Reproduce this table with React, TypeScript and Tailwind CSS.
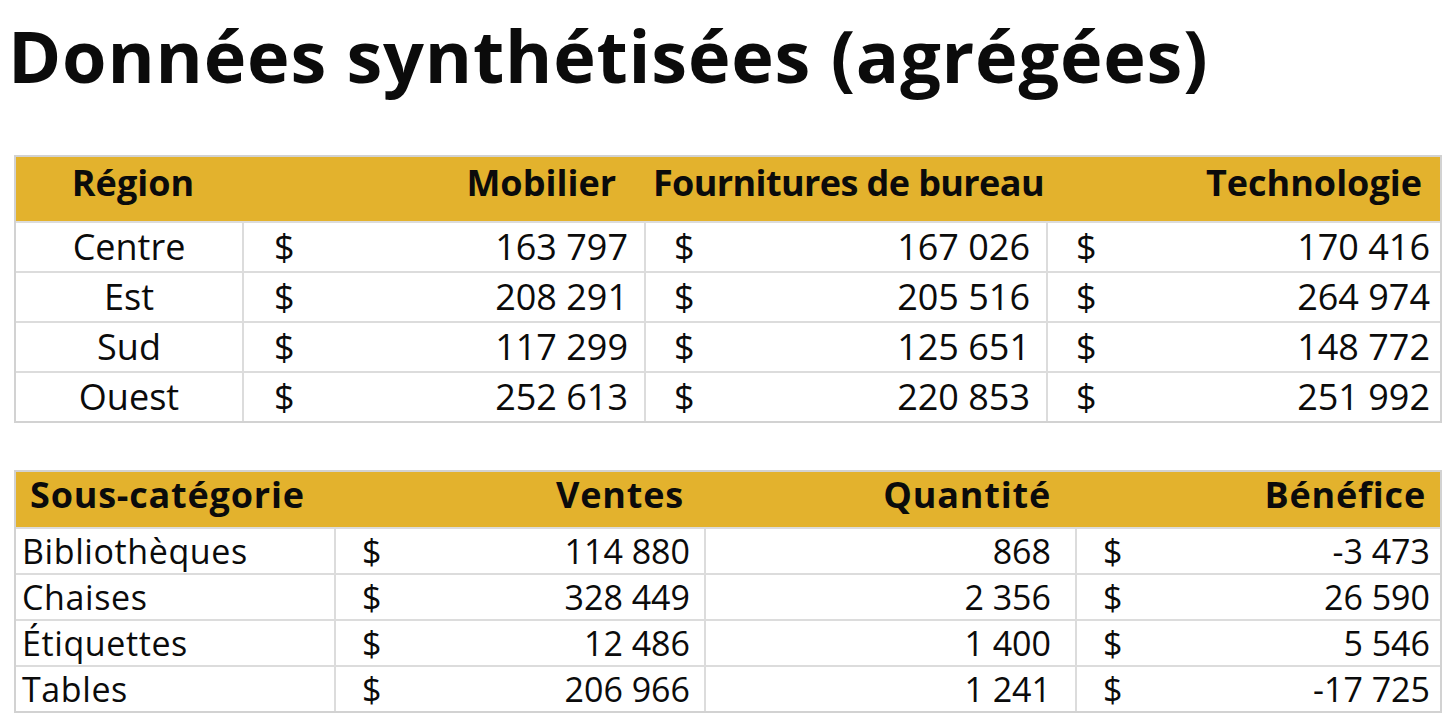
import React from "react";

const font = { fontFamily: '"Open Sans", "Liberation Sans", sans-serif' };

const regions = [
  { name: "Centre", mob: "163 797", fou: "167 026", tech: "170 416" },
  { name: "Est", mob: "208 291", fou: "205 516", tech: "264 974" },
  { name: "Sud", mob: "117 299", fou: "125 651", tech: "148 772" },
  { name: "Ouest", mob: "252 613", fou: "220 853", tech: "251 992" },
];

const subcats = [
  { name: "Bibliothèques", ventes: "114 880", qte: "868", benef: "-3 473" },
  { name: "Chaises", ventes: "328 449", qte: "2 356", benef: "26 590" },
  { name: "Étiquettes", ventes: "12 486", qte: "1 400", benef: "5 546" },
  { name: "Tables", ventes: "206 966", qte: "1 241", benef: "-17 725" },
];

function Money({ value, left, right }: { value: string; left: string; right: string }) {
  return (
    <div className={`flex items-center justify-between h-full ${left} ${right}`}>
      <span>$</span>
      <span>{value}</span>
    </div>
  );
}

export default function App() {
  return (
    <div className="w-[1456px] h-[720px] bg-white text-[#0b0b0b] overflow-hidden" style={font}>
      <h1 className="pl-[8px] pt-[12px] h-[155px] text-[72px] leading-[86px] font-bold tracking-[0.8px] whitespace-nowrap">
        Données synthétisées (agrégées)
      </h1>

      {/* Tableau par région */}
      <div className="ml-[14px] w-[1428px] border-2 border-[#d2d2d2] overflow-hidden">
        <div className="grid grid-cols-[226px_402px_402px_394px] h-[64px] pb-[12px] bg-[#e3b22d] items-center text-[36px] leading-[44px] font-bold">
          <div className="text-center pl-[8px]">Région</div>
          <div className="text-right pr-[28px]">Mobilier</div>
          <div className="text-right pr-[2px] whitespace-nowrap tracking-[-0.6px]">Fournitures de bureau</div>
          <div className="text-right pr-[18px]">Technologie</div>
        </div>
        {regions.map((r) => (
          <div
            key={r.name}
            className="grid grid-cols-[226px_402px_402px_394px] h-[50px] border-t-2 border-[#dcdcdc] text-[36px] leading-[44px]"
          >
            <div className="flex items-center justify-center">{r.name}</div>
            <div className="border-l-2 border-[#dcdcdc]">
              <Money value={r.mob} left="pl-[30px]" right="pr-[16px]" />
            </div>
            <div className="border-l-2 border-[#dcdcdc]">
              <Money value={r.fou} left="pl-[28px]" right="pr-[16px]" />
            </div>
            <div className="border-l-2 border-[#dcdcdc]">
              <Money value={r.tech} left="pl-[28px]" right="pr-[10px]" />
            </div>
          </div>
        ))}
      </div>

      {/* Tableau par sous-catégorie */}
      <div className="ml-[14px] mt-[47px] w-[1428px] border-2 border-[#d2d2d2] overflow-hidden">
        <div className="grid grid-cols-[318px_370px_371px_365px] h-[55px] pb-[10px] bg-[#e3b22d] items-center text-[36px] leading-[44px] font-bold tracking-[0.8px]">
          <div className="pl-[14px] whitespace-nowrap">Sous-catégorie</div>
          <div className="text-right pr-[20px]">Ventes</div>
          <div className="text-right pr-[24px]">Quantité</div>
          <div className="text-right pr-[14px]">Bénéfice</div>
        </div>
        {subcats.map((s) => (
          <div
            key={s.name}
            className="grid grid-cols-[318px_370px_371px_365px] h-[46px] border-t-2 border-[#dcdcdc] text-[34px] leading-[42px]"
          >
            <div className="flex items-center pl-[6px] tracking-[0.6px]">{s.name}</div>
            <div className="border-l-2 border-[#dcdcdc]">
              <Money value={s.ventes} left="pl-[26px]" right="pr-[14px]" />
            </div>
            <div className="border-l-2 border-[#dcdcdc] flex items-center justify-end pr-[24px]">{s.qte}</div>
            <div className="border-l-2 border-[#dcdcdc]">
              <Money value={s.benef} left="pl-[26px]" right="pr-[10px]" />
            </div>
          </div>
        ))}
      </div>
    </div>
  );
}
